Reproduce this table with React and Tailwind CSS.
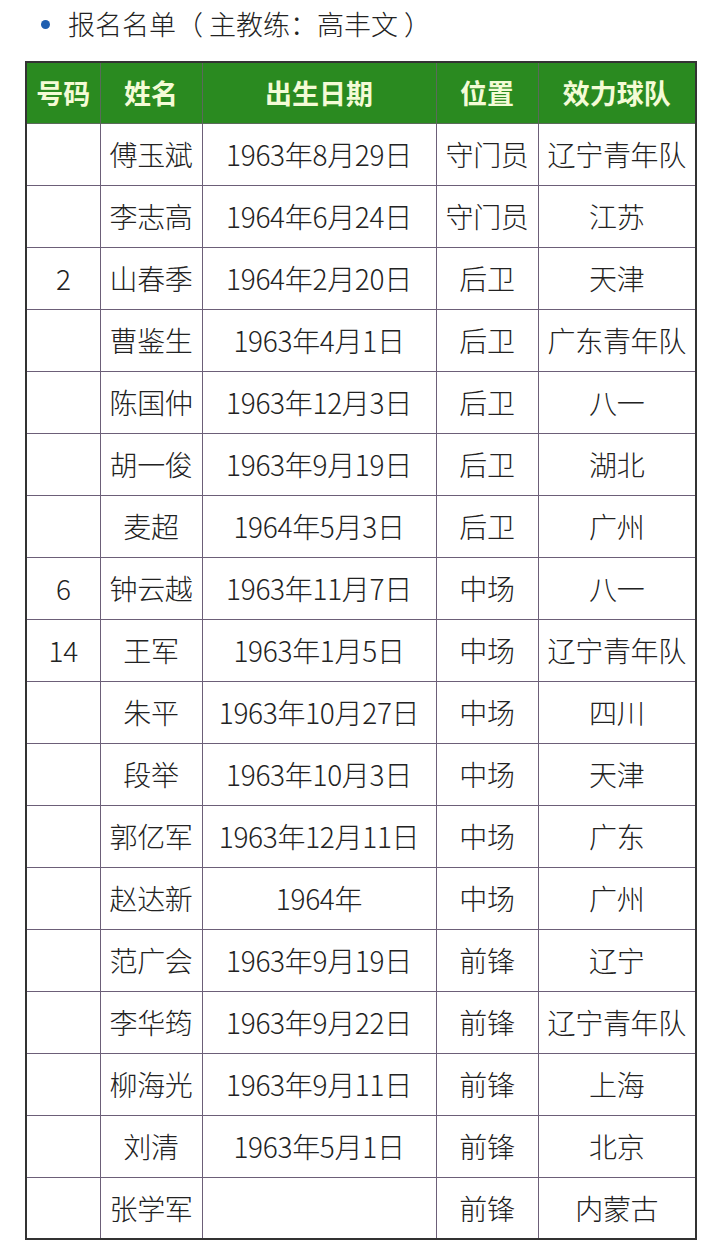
const rows = [
  ["", "傅玉斌", "1963年8月29日", "守门员", "辽宁青年队"],
  ["", "李志高", "1964年6月24日", "守门员", "江苏"],
  ["2", "山春季", "1964年2月20日", "后卫", "天津"],
  ["", "曹鉴生", "1963年4月1日", "后卫", "广东青年队"],
  ["", "陈国仲", "1963年12月3日", "后卫", "八一"],
  ["", "胡一俊", "1963年9月19日", "后卫", "湖北"],
  ["", "麦超", "1964年5月3日", "后卫", "广州"],
  ["6", "钟云越", "1963年11月7日", "中场", "八一"],
  ["14", "王军", "1963年1月5日", "中场", "辽宁青年队"],
  ["", "朱平", "1963年10月27日", "中场", "四川"],
  ["", "段举", "1963年10月3日", "中场", "天津"],
  ["", "郭亿军", "1963年12月11日", "中场", "广东"],
  ["", "赵达新", "1964年", "中场", "广州"],
  ["", "范广会", "1963年9月19日", "前锋", "辽宁"],
  ["", "李华筠", "1963年9月22日", "前锋", "辽宁青年队"],
  ["", "柳海光", "1963年9月11日", "前锋", "上海"],
  ["", "刘清", "1963年5月1日", "前锋", "北京"],
  ["", "张学军", "", "前锋", "内蒙古"],
];

const headers = ["号码", "姓名", "出生日期", "位置", "效力球队"];
const widths = ["w-[74px]", "w-[102px]", "w-[234px]", "w-[102px]", "w-[158px]"];

export default function App() {
  return (
    <div
      className="w-[716px] h-[1254px] bg-white text-[#222]"
      style={{ fontFamily: '"Noto Sans CJK SC", "Noto Sans", sans-serif' }}
    >
      <div className="flex items-center h-[46px] pl-[41px]">
        <span className="w-[9px] h-[9px] rounded-full bg-[#1f5fb0] mr-[18px] mt-[2px]"></span>
        <span className="text-[27px] font-light leading-none text-[#222] whitespace-pre">报名名单（ 主教练：高丰文 ）</span>
      </div>
      <div className="pl-[25px] pt-[15px]">
        <table className="border-collapse border-2 border-[#333] table-fixed w-[671px]">
          <thead>
            <tr className="h-[61px] bg-[#2a8a20]">
              {headers.map((h, i) => (
                <th
                  key={i}
                  className={`${widths[i]} border border-[#5a6a5a] text-[27px] font-bold text-[#f4fbd6] text-center p-0 leading-none`}
                >
                  {h}
                </th>
              ))}
            </tr>
          </thead>
          <tbody>
            {rows.map((r, ri) => (
              <tr key={ri} className="h-[62px]">
                {r.map((c, ci) => (
                  <td
                    key={ci}
                    className="border border-[#6c5f78] text-[28px] font-light text-center p-0 leading-none whitespace-nowrap tracking-[-0.3px]"
                  >
                    {c}
                  </td>
                ))}
              </tr>
            ))}
          </tbody>
        </table>
      </div>
    </div>
  );
}
